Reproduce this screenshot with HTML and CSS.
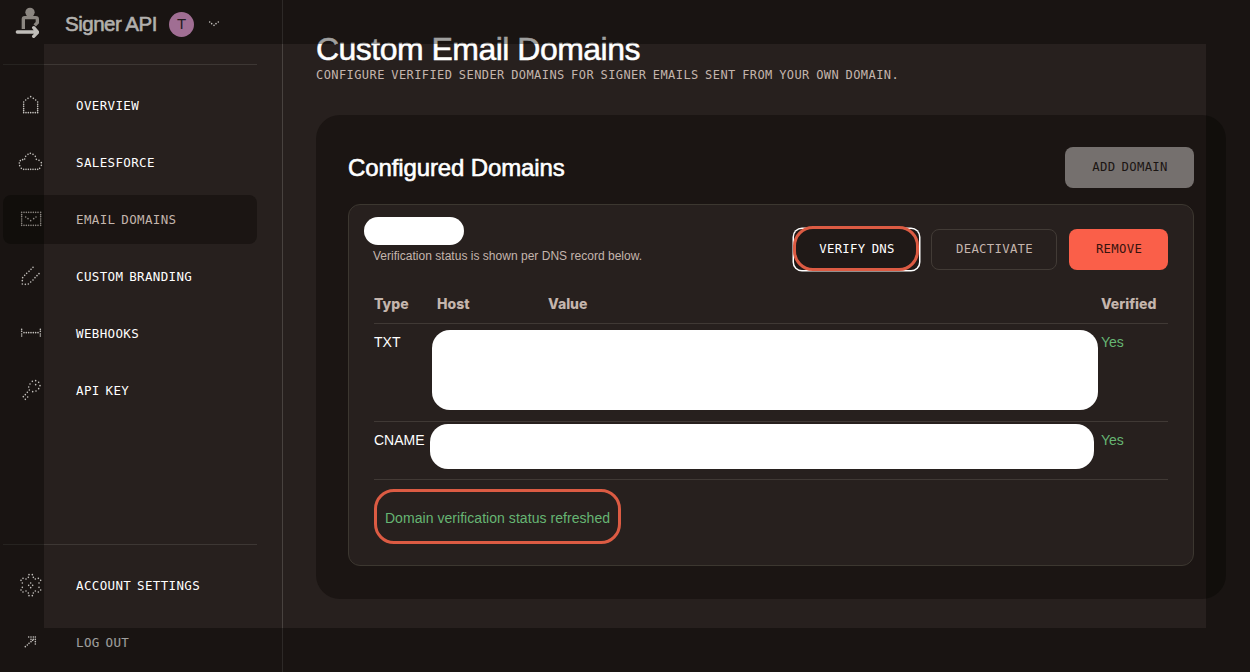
FILE: index.html
```
<!DOCTYPE html>
<html lang="en">
<head>
    <meta charset="UTF-8">
    <meta name="viewport" content="width=device-width, initial-scale=1.0">
    <title>Custom Email Domains</title>
    <link rel="stylesheet" href="styles.css">
</head>
<body>
    <aside class="sidebar">
        <div class="brand">
            <svg class="logo" viewBox="0 0 72 96">
                <circle cx="45" cy="16" r="14" fill="#8b8680"/>
                <path d="M25 66V36q0-4 4-4H62q5 0 5 5v10l-8 8" fill="none" stroke="#8b8680" stroke-width="10"/>
                <path d="M7 75H62M56 62l12 14-12 12" fill="none" stroke="#c0bdb9" stroke-width="10" stroke-linecap="round"/>
            </svg>
            <span class="brand-name">Signer API</span>
            <span class="avatar">T</span>
            <svg class="chevron" viewBox="0 0 36 24"><path d="M5 6h0M11 11h0M18 16h0M24 11h0M31 6h0"/></svg>
        </div>

        <nav class="nav">
            <a class="nav-item">
                <svg class="icon" viewBox="0 0 72 72"><path d="M35 11h0M27 16h0M20 21h0M14 27h0M43 16h0M50 21h0M56 27h0M14 34h0M14 40h0M14 47h0M14 53h0M56 34h0M56 40h0M56 47h0M56 53h0M14 59h0M21 59h0M28 59h0M35 59h0M42 59h0M49 59h0M56 59h0"/></svg>
                <span>OVERVIEW</span>
            </a>
            <a class="nav-item">
                <svg class="icon" viewBox="0 0 72 72"><path d="M1 39h0M4 32h0M11 29h0M17 27h0M20 19h0M27 13h0M34 10h0M42 13h0M49 19h0M52 28h0M60 31h0M67 38h0M67 46h0M62 55h0M56 58h0M49 58h0M42 58h0M35 58h0M28 58h0M21 58h0M14 58h0M7 55h0M2 47h0"/></svg>
                <span>SALESFORCE</span>
            </a>
            <a class="nav-item active">
                <svg class="icon" viewBox="0 0 72 72"><path d="M8 16h0M15 16h0M22 16h0M29 16h0M36 16h0M43 16h0M50 16h0M57 16h0M65 16h0M8 23h0M8 29h0M8 36h0M8 42h0M8 49h0M65 23h0M65 29h0M65 36h0M65 42h0M65 49h0M8 55h0M15 55h0M22 55h0M29 55h0M36 55h0M43 55h0M50 55h0M57 55h0M65 55h0M20 30h0M27 35h0M35 41h0M44 35h0M51 30h0"/></svg>
                <span>EMAIL DOMAINS</span>
            </a>
            <a class="nav-item">
                <svg class="icon" viewBox="0 0 72 72"><path d="M42 10h0M36 16h0M30 22h0M23 28h0M17 34h0M11 41h0M10 50h0M10 60h0M19 61h0M28 60h0M35 54h0M42 48h0M48 41h0M54 35h0M60 29h0"/></svg>
                <span>CUSTOM BRANDING</span>
            </a>
            <a class="nav-item">
                <svg class="icon" viewBox="0 0 72 72"><path d="M8 25h0M8 31h0M8 39h0M8 45h0M64 25h0M64 31h0M64 39h0M64 45h0M15 35h0M22 35h0M29 35h0M36 35h0M43 35h0M50 35h0M57 35h0"/></svg>
                <span>WEBHOOKS</span>
            </a>
            <a class="nav-item">
                <svg class="icon" viewBox="0 0 72 72"><path d="M50 8h0M40 10h0M33 18h0M29 27h0M31 36h0M41 41h0M51 39h0M59 32h0M63 23h0M59 13h0M50 20h0M25 43h0M19 50h0M13 56h0M19 64h0M26 57h0"/></svg>
                <span>API KEY</span>
            </a>
        </nav>

        <nav class="nav nav-bottom">
            <a class="nav-item">
                <svg class="icon" viewBox="0 0 72 72"><path d="M30 5h0M40 5h0M28 13h0M43 13h0M21 18h0M49 18h0M12 16h0M58 16h0M6 22h0M65 22h0M10 30h0M60 30h0M10 43h0M60 43h0M6 51h0M65 51h0M12 57h0M58 57h0M21 54h0M49 54h0M28 60h0M43 60h0M30 68h0M40 68h0M35 30h0M41 37h0M35 44h0M29 37h0"/></svg>
                <span>ACCOUNT SETTINGS</span>
            </a>
            <a class="nav-item">
                <svg class="icon" viewBox="0 0 72 72"><path d="M29 21h0M36 21h0M43 21h0M49 21h0M43 28h0M49 28h0M49 35h0M49 42h0M36 28h0M36 35h0M41 31h0M30 40h0M25 45h0M19 50h0"/></svg>
                <span>LOG OUT</span>
            </a>
        </nav>
    </aside>

    <main class="content">
        <h1>Custom Email Domains</h1>
        <p class="subtitle">CONFIGURE VERIFIED SENDER DOMAINS FOR SIGNER EMAILS SENT FROM YOUR OWN DOMAIN.</p>

        <section class="panel">
            <div class="panel-header">
                <h2>Configured Domains</h2>
                <button class="btn btn-add">ADD DOMAIN</button>
            </div>

            <div class="card">
                <div class="card-header">
                    <div class="domain">
                        <div class="domain-name"></div>
                        <p>Verification status is shown per DNS record below.</p>
                    </div>
                    <div class="actions">
                        <button class="btn btn-verify">VERIFY DNS</button>
                        <button class="btn btn-outline">DEACTIVATE</button>
                        <button class="btn btn-remove">REMOVE</button>
                    </div>
                </div>

                <div class="record record-head">
                    <span>Type</span>
                    <span>Host</span>
                    <span>Value</span>
                    <span>Verified</span>
                </div>
                <div class="record record-txt">
                    <span>TXT</span>
                    <div class="hidden-value"></div>
                    <span class="yes">Yes</span>
                </div>
                <div class="record record-cname">
                    <span>CNAME</span>
                    <div class="hidden-value"></div>
                    <span class="yes">Yes</span>
                </div>

                <div class="message">Domain verification status refreshed</div>
            </div>
        </section>
    </main>

    <div class="spotlight"></div>
</body>
</html>
```
FILE: styles.css
```
* {
    box-sizing: border-box;
}

body {
    margin: 0;
    height: 672px;
    display: flex;
    background: #27201e;
    color: #fff;
    font-family: "Liberation Sans", Arial, sans-serif;
    overflow: hidden;
}

h1, h2, p {
    margin: 0;
}

/* Sidebar */
.sidebar {
    width: 283px;
    flex-shrink: 0;
    display: flex;
    flex-direction: column;
    padding: 0 25px 5px 3px;
    border-right: 1px solid #48423f;
}

.brand {
    height: 65px;
    display: flex;
    align-items: flex-start;
    padding: 7px 0 0 12px;
    border-bottom: 1px solid #3d3734;
}

/* stays readable on top of the dimmed edge */
.brand > *,
.nav-item .icon {
    position: relative;
    z-index: 1;
}

.logo {
    width: 24px;
    height: 32px;
}

.brand-name {
    margin: 5px 0 0 26px;
    width: 94px;
    color: #b2b0ad;
    font-size: 20.5px;
    line-height: 24px;
    letter-spacing: -0.5px;
    white-space: nowrap;
    -webkit-text-stroke: 0.6px currentColor;
}

.avatar {
    width: 25px;
    height: 25px;
    margin: 5px 0 0 10px;
    border-radius: 50%;
    background: #a06e93;
    color: #221a1c;
    font-size: 15px;
    line-height: 24px;
    text-align: center;
}

.chevron {
    width: 12px;
    height: 8px;
    margin: 13px 0 0 14px;
}

.icon,
.chevron {
    flex-shrink: 0;
    overflow: visible;
    fill: none;
    stroke: #c6c3bf;
    stroke-width: 4.8;
    stroke-linecap: round;
}

.nav {
    display: flex;
    flex-direction: column;
    gap: 8px;
    padding-top: 16px;
}

.nav-bottom {
    margin-top: auto;
    border-top: 1px solid #3d3734;
}

.nav-item {
    height: 49px;
    display: flex;
    align-items: center;
    gap: 33px;
    padding: 0 16px 1px;
    border-radius: 8px;
    font-family: "DejaVu Sans Mono", monospace;
    font-size: 12.5px;
    letter-spacing: 0.35px;
    word-spacing: -2px;
    white-space: nowrap;
}

.nav-item .icon {
    width: 24px;
    height: 24px;
}

.nav-item.active {
    background: #1b1513;
    color: #c4b5ad;
}

.nav-item.active .icon {
    stroke: #8f8a85;
}

/* Content */
.content {
    flex: 1;
    padding: 31px 24px 0 33px;
}

h1 {
    font-size: 32px;
    font-weight: normal;
    line-height: 36px;
    letter-spacing: -0.52px;
    -webkit-text-stroke: 0.5px #fff;
}

.subtitle {
    height: 17px;
    font-family: "DejaVu Sans Mono", monospace;
    font-size: 12px;
    line-height: 17px;
    letter-spacing: 0.42px;
    word-spacing: -1.2px;
    color: #c4b5ad;
    white-space: nowrap;
}

.panel {
    width: 910px;
    height: 484px;
    margin-top: 31px;
    padding: 32px;
    border-radius: 24px;
    background: #1b1513;
}

.panel-header {
    display: flex;
    justify-content: space-between;
    align-items: center;
    height: 41px;
}

h2 {
    font-size: 24px;
    font-weight: normal;
    letter-spacing: -0.12px;
    -webkit-text-stroke: 0.6px #fff;
}

.btn {
    height: 41px;
    padding: 0 0 1px 1px;
    border: none;
    border-radius: 8px;
    font-family: "DejaVu Sans Mono", monospace;
    font-size: 12.3px;
    letter-spacing: 0.3px;
    word-spacing: -1.5px;
    cursor: pointer;
}

.btn-add {
    width: 129px;
    background: #75706e;
    color: #1b1513;
}

.card {
    width: 846px;
    height: 362px;
    margin-top: 16px;
    padding: 12px 25px 0;
    border: 1px solid #3c3730;
    border-radius: 12px;
    background: #27201e;
}

.card-header {
    display: flex;
    justify-content: space-between;
    height: 75px;
}

.domain-name {
    width: 100px;
    height: 28px;
    margin-left: -10px;
    border-radius: 14px;
    background: #fff;
}

.domain p {
    margin: 2px 0 0 -1px;
    font-size: 12px;
    line-height: 18px;
    letter-spacing: 0.02px;
    color: #c4b5ad;
}

.actions {
    display: flex;
    gap: 12px;
    padding-top: 12px;
}

.btn-verify {
    position: relative;
    width: 125px;
    background: #1f1917;
    color: #fff;
    box-shadow: 0 0 0 1.5px #fff;
}

/* highlight ring around the button */
.btn-verify::after {
    content: "";
    position: absolute;
    inset: -3px 0 -1px -1px;
    border: 3px solid #dc5b43;
    border-radius: 20px;
}

.btn-outline {
    width: 126px;
    border: 1px solid #423b36;
    background: transparent;
    color: #c4b5ad;
}

.btn-remove {
    width: 99px;
    background: #fa5f49;
    color: #35130e;
}

/* DNS records */
.record {
    display: grid;
    grid-template-columns: 63px 111px 553px 67px;
    align-items: start;
    border-bottom: 1px solid #403935;
    font-size: 14px;
    line-height: 18px;
}

.record-head {
    height: 32px;
    padding-top: 3px;
    font-family: Inter, sans-serif;
    font-size: 14px;
    font-weight: 800;
    color: #c4b5ad;
}

.hidden-value {
    grid-column: 2 / 4;
    background: #fff;
    border-radius: 18px;
}

.record > span {
    margin-top: 9px;
}

.record-head > span {
    margin-top: 0;
}

.record-txt {
    height: 98px;
}

.record-txt .hidden-value {
    height: 80px;
    margin: 6px 3px 0 -5px;
}

.record-cname {
    height: 58px;
}

.record-cname .hidden-value {
    height: 45px;
    margin: 2px 7px 0 -7px;
}

.yes {
    color: #66b573;
}

.message {
    width: 247px;
    height: 55px;
    margin: 9px 0 0;
    border: 3px solid #dc5b43;
    border-radius: 20px;
    color: #66b573;
    font-size: 14px;
    line-height: 53px;
    letter-spacing: 0.05px;
    text-align: center;
    white-space: nowrap;
}

/* dims everything outside the window */
.spotlight {
    position: absolute;
    top: 44px;
    left: 44px;
    width: 1162px;
    height: 584px;
    box-shadow: 0 0 0 100px rgba(2, 2, 0, 0.38);
    pointer-events: none;
}
```
